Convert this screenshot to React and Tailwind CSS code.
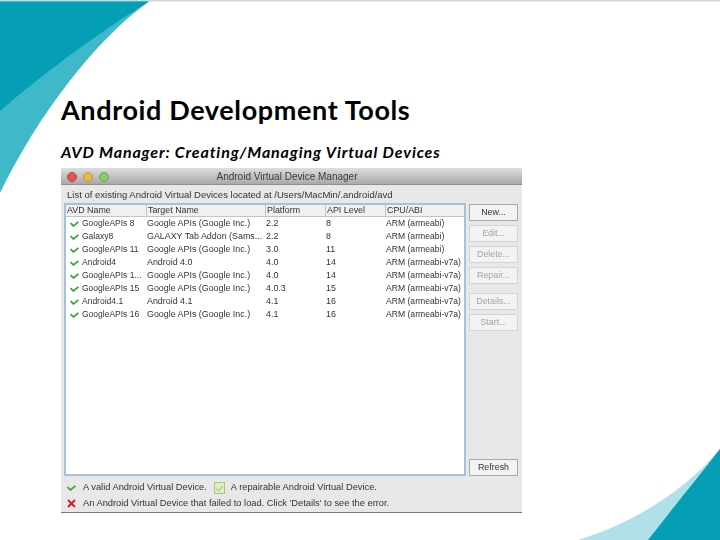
const rows = [
  ["GoogleAPIs 8", "Google APIs (Google Inc.)", "2.2", "8", "ARM (armeabi)"],
  ["Galaxy8", "GALAXY Tab Addon (Sams...", "2.2", "8", "ARM (armeabi)"],
  ["GoogleAPIs 11", "Google APIs (Google Inc.)", "3.0", "11", "ARM (armeabi)"],
  ["Android4", "Android 4.0", "4.0", "14", "ARM (armeabi-v7a)"],
  ["GoogleAPIs 1...", "Google APIs (Google Inc.)", "4.0", "14", "ARM (armeabi-v7a)"],
  ["GoogleAPIs 15", "Google APIs (Google Inc.)", "4.0.3", "15", "ARM (armeabi-v7a)"],
  ["Android4.1", "Android 4.1", "4.1", "16", "ARM (armeabi-v7a)"],
  ["GoogleAPIs 16", "Google APIs (Google Inc.)", "4.1", "16", "ARM (armeabi-v7a)"],
];

const headers = ["AVD Name", "Target Name", "Platform", "API Level", "CPU/ABI"];
const columns = "grid grid-cols-[80px_119px_60px_60px_81px]";

function Check({ className }) {
  return (
    <svg viewBox="0 0 10 7" className={className}>
      <path d="M.4 2.4 3.8 5.8 9.6 1" fill="none" stroke="#35a83c" strokeWidth="2" />
    </svg>
  );
}

function Btn({ label, on, className = "" }) {
  return (
    <div
      className={`h-[17px] w-[49px] flex items-center justify-center border bg-[#f3f3f3] ${
        on ? "border-[#a8a8a8] text-[#333]" : "border-[#d4d4d4] text-[#a4a4a4]"
      } ${className}`}
    >
      {label}
    </div>
  );
}

export default function App() {
  return (
    <div className="relative w-[720px] h-[540px] overflow-hidden bg-white font-['Liberation_Sans',sans-serif]">
      {/* corner art */}
      <svg viewBox="0 0 720 540" className="absolute inset-0 w-[720px] h-[540px]">
        <rect width="720" height="1.5" fill="#d4d4d4" />
        <path d="M0 1.5H149C95 40 38 115 0 193Z" fill="#3fb9c9" />
        <path d="M0 1.5H149C100 32 45 72 0 111Z" fill="#049fb5" />
        <path d="M578 540C630 524 682 494 720 449V540Z" fill="#b1e0e8" />
        <path d="M648 540C672 509 696 480 720 449V540Z" fill="#049fb5" />
      </svg>

      <div className="relative pl-[61px] pt-[92px]">
        <h1 className="h-[35px] text-[27px] leading-[35px] font-bold text-black font-['Lato',sans-serif] tracking-[0.62px]">
          Android Development Tools
        </h1>
        <p className="mt-[15px] h-[20px] text-[16px] leading-[20px] font-bold italic text-black font-['Lato',sans-serif] tracking-[0.85px]">
          AVD Manager: Creating/Managing Virtual Devices
        </p>

        {/* window */}
        <div className="mt-[6px] w-[461px] h-[345px] flex flex-col bg-[#e8e8e8] border-b border-[#777] text-[8.9px] leading-[13px] text-[#333] blur-[0.4px]">
          <div className="relative h-[17px] flex items-center justify-center shrink-0 pr-[9px] border-b border-[#8f8f8f] bg-gradient-to-b from-[#dedede] to-[#a9a9a9] rounded-t-[3px] text-[10px] text-[#3a3a3a]">
            <div className="absolute left-[6px] top-[4px] flex gap-[6px]">
              <span className="w-[10px] h-[10px] rounded-full bg-[#e0555a] border border-[#b5484c]" />
              <span className="w-[10px] h-[10px] rounded-full bg-[#e9b652] border border-[#bd9440]" />
              <span className="w-[10px] h-[10px] rounded-full bg-[#8ac66a] border border-[#6ea452]" />
            </div>
            Android Virtual Device Manager
          </div>

          <div className="h-[18px] pl-[6px] flex items-center shrink-0 text-[9.5px]">
            List of existing Android Virtual Devices located at /Users/MacMin/.android/avd
          </div>

          <div className="flex gap-[3px] pl-[3px] shrink-0">
            <div className="w-[402px] h-[273px] border-2 border-[#a9c0dc] bg-white flex flex-col">
              <div className={`${columns} h-[12px] leading-[11px] bg-[#f0f0f0] border-b border-[#c4c4c4] shrink-0`}>
                {headers.map((h, i) => (
                  <div key={h} className={`${i === 0 ? "pl-[1px]" : "pl-[1px] border-l border-[#c4c4c4]"} truncate`}>
                    {h}
                  </div>
                ))}
              </div>
              <div>
                {rows.map((r) => (
                  <div key={r[0]} className={`${columns} h-[13px] items-center`}>
                    <div className="flex items-center gap-[3px] pl-[4px] whitespace-nowrap text-[8.5px]">
                      <Check className="w-[9px] h-[6px] shrink-0" />
                      {r[0]}
                    </div>
                    <div className="pl-[1px] whitespace-nowrap">{r[1]}</div>
                    <div className="pl-[1px]">{r[2]}</div>
                    <div className="pl-[1px]">{r[3]}</div>
                    <div className="pl-[1px] whitespace-nowrap text-[8.6px]">{r[4]}</div>
                  </div>
                ))}
              </div>
            </div>

            <div className="flex flex-col h-[273px] pt-[1px]">
              <Btn label="New..." on />
              <Btn label="Edit..." className="mt-[4px]" />
              <Btn label="Delete..." className="mt-[4px]" />
              <Btn label="Repair..." className="mt-[4px]" />
              <Btn label="Details..." className="mt-[9px]" />
              <Btn label="Start..." className="mt-[4px]" />
              <Btn label="Refresh" on className="mt-auto" />
            </div>
          </div>

          <div className="pl-[6px] pt-[5px] flex flex-col gap-[3px] shrink-0 text-[9.3px]">
            <div className="flex items-center h-[13px]">
              <Check className="w-[9px] h-[6px] mr-[7px]" />
              <span>A valid Android Virtual Device.</span>
              <svg viewBox="0 0 11 12" className="w-[11px] h-[12px] ml-[7px] mr-[6px]">
                <rect x=".5" y=".5" width="10" height="11" fill="#dcefc4" stroke="#a9c77e" />
                <path d="M2.5 6.5 4.5 9 8.5 4" fill="none" stroke="#8fbe6a" strokeWidth="1" />
              </svg>
              <span>A repairable Android Virtual Device.</span>
            </div>
            <div className="flex items-center h-[13px]">
              <svg viewBox="0 0 9 9" className="w-[9px] h-[9px] mr-[7px]">
                <path d="M1 1 8 8M8 1 1 8" stroke="#c9202b" strokeWidth="1.9" />
              </svg>
              <span>An Android Virtual Device that failed to load. Click 'Details' to see the error.</span>
            </div>
          </div>
        </div>
      </div>
    </div>
  );
}
